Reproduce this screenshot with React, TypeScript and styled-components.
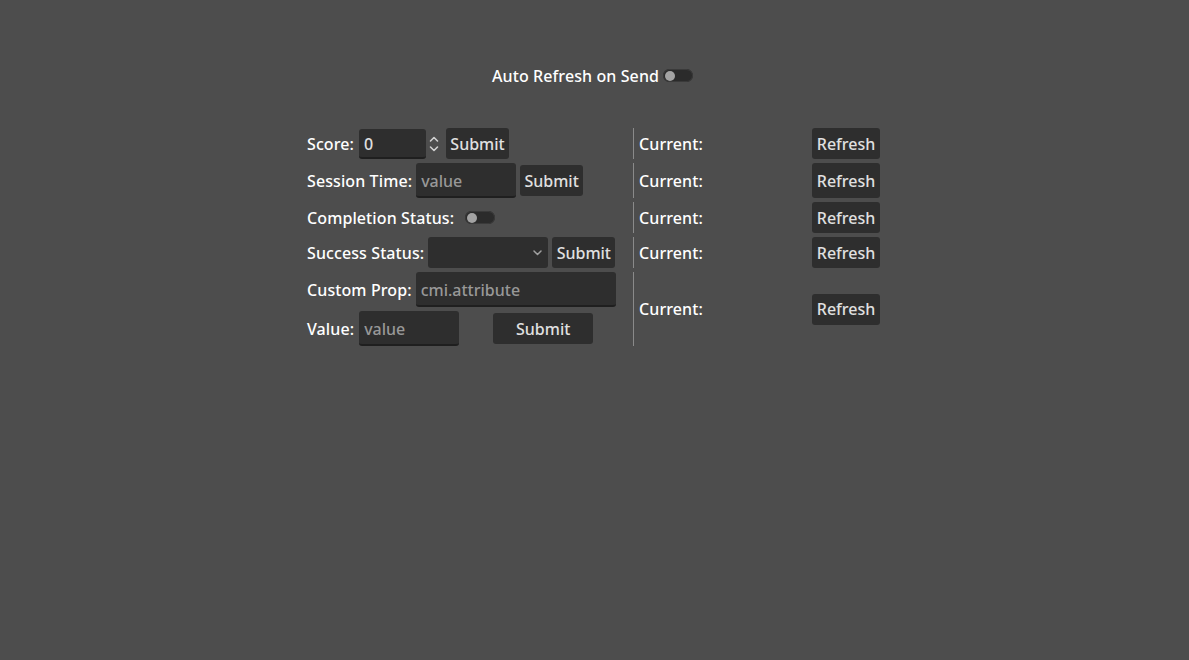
import React from "react";
import styled, { createGlobalStyle } from "styled-components";

const GlobalStyle = createGlobalStyle`
  html, body {
    margin: 0;
    padding: 0;
    background: #4d4d4d;
  }
  body {
    font-family: "Noto Sans", "Open Sans", sans-serif;
    font-weight: 500;
    font-size: 16px;
    color: #ffffff;
  }
  * { box-sizing: border-box; }
`;

const Page = styled.div`
  min-height: 660px;
  display: flex;
  flex-direction: column;
  align-items: center;
  padding-top: 60px;
  padding-right: 2px;
`;

const TopRow = styled.div`
  height: 31px;
  display: flex;
  align-items: center;
  gap: 4px;
  margin-bottom: 37px;
  margin-right: 2px;
`;

const Label = styled.span`
  color: #ffffff;
  font-size: 16px;
  line-height: 20px;
  letter-spacing: 0.1px;
  white-space: nowrap;
`;

const Grid = styled.div`
  display: grid;
  grid-template-columns: 326px 1px 246px;
  row-gap: 4px;
`;

const LeftCell = styled.div`
  display: flex;
  flex-direction: column;
  gap: 4px;
  justify-content: center;
`;

const Line = styled.div<{ $h?: number }>`
  display: flex;
  align-items: center;
  gap: 4px;
  height: ${(p) => (p.$h ? `${p.$h}px` : "auto")};
`;

const Sep = styled.div`
  width: 1px;
  background: #8a8a8a;
`;

const RightCell = styled.div<{ $center?: boolean }>`
  display: flex;
  align-items: ${(p) => (p.$center ? "center" : "stretch")};
  justify-content: space-between;
  padding-left: 5px;
  align-self: ${(p) => (p.$center ? "center" : "stretch")};
`;

const CurrentLabel = styled(Label)`
  display: flex;
  align-items: center;
`;

const Button = styled.button<{ $w?: number; $ml?: number }>`
  font-family: inherit;
  font-weight: inherit;
  font-size: 16px;
  color: #e0e0e0;
  background: #2e2e2e;
  border: none;
  border-radius: 3px;
  min-height: 31px;
  padding: 0 4px;
  width: ${(p) => (p.$w ? `${p.$w}px` : "auto")};
  margin-left: ${(p) => (p.$ml ? `${p.$ml}px` : "0")};
  display: flex;
  align-items: center;
  justify-content: center;
  cursor: pointer;
`;

const Input = styled.input<{ $w: number; $h?: number; $ml?: number }>`
  font-family: inherit;
  font-weight: inherit;
  font-size: 16px;
  color: #e0e0e0;
  background: #2e2e2e;
  border: none;
  border-bottom: 2px solid #1f1f1f;
  border-radius: 3px;
  width: ${(p) => p.$w}px;
  height: ${(p) => p.$h ?? 35}px;
  margin-left: ${(p) => (p.$ml ? `${p.$ml}px` : "0")};
  padding: 3px 4px 0 5px;
  outline: none;
  &::placeholder {
    color: #989898;
  }
`;

const Spin = styled.div`
  display: flex;
  align-items: center;
  width: 84px;
`;

const SpinArrows = styled.svg`
  margin-left: 3px;
`;

const Select = styled.div`
  width: 120px;
  height: 31px;
  background: #2e2e2e;
  border-radius: 3px;
  display: flex;
  align-items: center;
  justify-content: flex-end;
  padding-right: 6px;
`;

const Toggle = styled.div<{ $ml?: number }>`
  width: 30px;
  height: 13px;
  border-radius: 7px;
  background: #2b2b2b;
  box-shadow: inset 0 0 0 1px #3a3a3a;
  margin-left: ${(p) => (p.$ml ? `${p.$ml}px` : "0")};
  display: flex;
  align-items: center;
  padding-left: 2px;
`;

const Knob = styled.div`
  width: 10px;
  height: 10px;
  border-radius: 50%;
  background: #a3a3a3;
`;

const Right = ({ center }: { center?: boolean }) => (
  <>
    <Sep />
    <RightCell $center={center}>
      <CurrentLabel>Current:</CurrentLabel>
      <Button $w={68}>Refresh</Button>
    </RightCell>
  </>
);

export default function App() {
  return (
    <>
      <GlobalStyle />
      <Page>
        <TopRow>
          <Label>Auto Refresh on Send</Label>
          <Toggle>
            <Knob />
          </Toggle>
        </TopRow>
        <Grid>
          <LeftCell>
            <Line>
              <Label>Score:</Label>
              <Spin>
                <Input $w={67} $h={30} $ml={1} defaultValue="0" />
                <SpinArrows width="10" height="16" viewBox="0 0 10 16">
                  <path d="M1.5 5 L5 1.5 L8.5 5" fill="none" stroke="#d0d0d0" strokeWidth="1.6" strokeLinecap="round" strokeLinejoin="round" />
                  <path d="M1.5 11 L5 14.5 L8.5 11" fill="none" stroke="#d0d0d0" strokeWidth="1.6" strokeLinecap="round" strokeLinejoin="round" />
                </SpinArrows>
              </Spin>
              <Button $w={63}>Submit</Button>
            </Line>
          </LeftCell>
          <Right />

          <LeftCell>
            <Line>
              <Label>Session Time:</Label>
              <Input $w={100} placeholder="value" />
              <Button $w={63}>Submit</Button>
            </Line>
          </LeftCell>
          <Right />

          <LeftCell>
            <Line $h={31}>
              <Label>Completion Status:</Label>
              <Toggle $ml={7}>
                <Knob />
              </Toggle>
            </Line>
          </LeftCell>
          <Right />

          <LeftCell>
            <Line>
              <Label>Success Status:</Label>
              <Select>
                <svg width="9" height="6" viewBox="0 0 9 6">
                  <path d="M1 1 L4.5 4.5 L8 1" fill="none" stroke="#a0a0a0" strokeWidth="1.5" strokeLinecap="round" strokeLinejoin="round" />
                </svg>
              </Select>
              <Button $w={63}>Submit</Button>
            </Line>
          </LeftCell>
          <Right />

          <LeftCell>
            <Line>
              <Label>Custom Prop:</Label>
              <Input $w={200} placeholder="cmi.attribute" />
            </Line>
            <Line>
              <Label>Value:</Label>
              <Input $w={100} $ml={1} placeholder="value" />
              <Button $w={100} $ml={30}>Submit</Button>
            </Line>
          </LeftCell>
          <Right center />
        </Grid>
      </Page>
    </>
  );
}
